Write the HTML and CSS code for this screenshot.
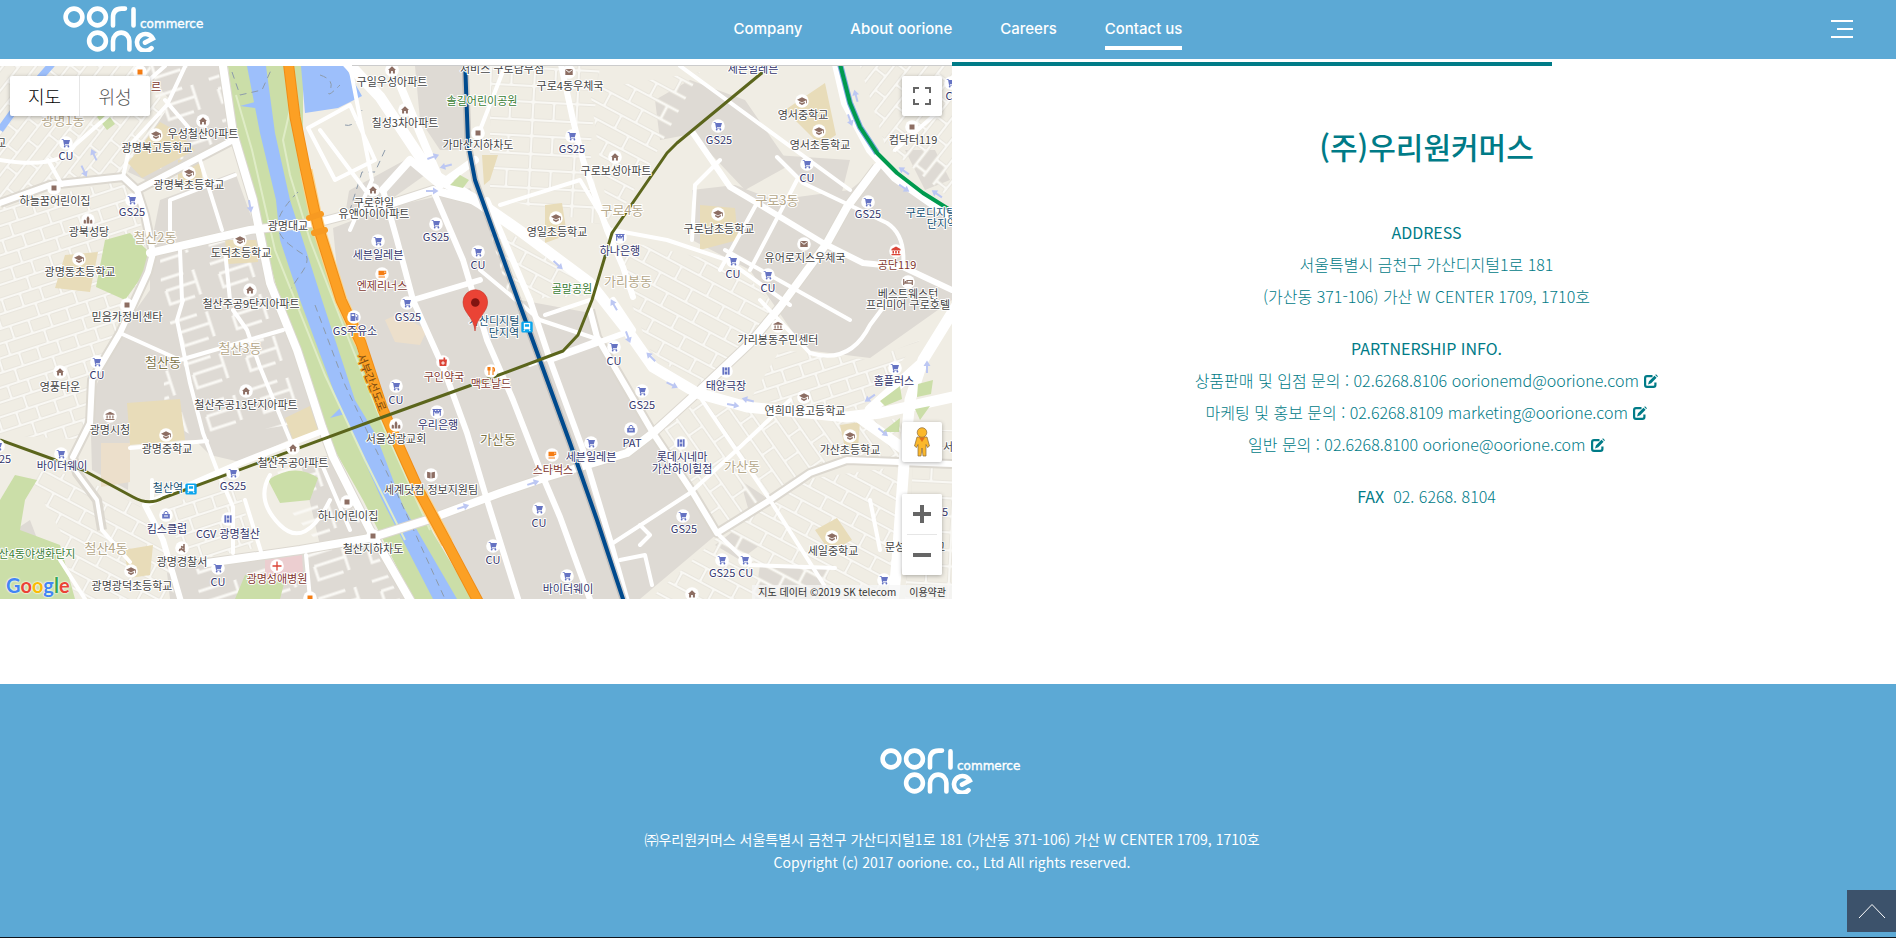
FILE: index.html
```html
<!DOCTYPE html>
<html lang="ko">
<head>
<meta charset="utf-8">
<meta name="viewport" content="width=device-width, initial-scale=1">
<title>oorione - Contact us</title>
<link rel="stylesheet" href="styles.css">
</head>
<body>
<svg class="defs" aria-hidden="true">
  <defs>
    <symbol id="logo" viewBox="0 0 144 46">
      <g fill="none" stroke="#fff" stroke-width="4.6" stroke-linecap="round">
        <circle cx="11" cy="11" r="8.4"/><circle cx="34.500" cy="11" r="8.4"/>
        <path d="M50 19.400V11.500Q50 2.600 58.500 2.600H62M70.500 3.400V19.400"/>
        <circle cx="34.500" cy="35" r="8.400"/>
        <path d="M50 43.400V35a8.200 8.400 0 0 1 16.400 0V43.400"/>
        <path d="M82 36.600L89.800 32.500A8.400 8.400 0 1 0 88.500 42.200"/>
      </g>
      <text x="77" y="21.500" class="logo-word">commerce</text>
    </symbol>
    <symbol id="edit" viewBox="0 0 15 15">
      <path fill="none" stroke="currentColor" stroke-width="2.200" d="M9.500 2.100H4Q2.100 2.100 2.100 4V11Q2.100 12.900 4 12.900H10.500Q12.400 12.900 12.400 11V8.500"/>
      <path fill="currentColor" d="M5 10.400L6 7.200 11.500 1.700 13.600 3.800 8.200 9.300ZM12.200 1L13 .2 15 2.200 14.200 3Z"/>
    </symbol>
    <g id="cart"><circle r="6.800" fill="#fff"/><path fill="#6573c3" d="M-4.300-3.800H-2.400L-1.900-3H4L2.800 1H-1.200L-1 1.700H3V2.600H-1.900L-2.900-2.900H-4.300Z"/><circle cx="-1.300" cy="3.500" r=".9" fill="#6573c3"/><circle cx="2.400" cy="3.500" r=".9" fill="#6573c3"/></g>
    <g id="home"><circle r="6.800" fill="#fff"/><path fill="#8d6e63" d="M0-3.800L4 0H2.900V3.400H.9V1H-.9V3.400H-2.900V0H-4Z"/></g>
    <g id="school"><circle r="6.800" fill="#fff"/><path fill="#8d6e63" d="M0-3.700L5-1.200V2.300H4.200V-.7L0 1.400-5-1.200ZM-2.800.8L0 2.200 2.800.8V2.500L0 4-2.800 2.500Z"/></g>
    <g id="dot"><circle r="6.800" fill="#fff"/><path fill="#8d6e63" d="M-2.500-2.500H2.500V2.500H-2.500Z"/></g>
    <g id="dot-hot"><circle r="6.800" fill="#fff"/><path fill="#f57c12" d="M-2.500-2.500H2.500V2.500H-2.500Z"/></g>
    <g id="cup"><circle r="6.800" fill="#fff"/><path fill="#f57c12" fill-rule="evenodd" d="M-3.500-3.300H4.200V0H2.500V1.300H-3.500ZM2.500-2.400V-1H3.300V-2.400ZM-3.500 2.400H3V3.500H-3.500Z"/></g>
    <g id="food"><circle r="6.800" fill="#fff"/><path fill="none" stroke="#f57c12" stroke-width="1.100" d="M-3-4V-1H-1V-4M-2-4V4M2 4V-3.500Q3.800-3.500 3.500 0H2"/></g>
    <g id="mail"><circle r="6.800" fill="#fff"/><path fill="#8d6e63" d="M-3.700-3H3.700V3H-3.700Z"/><path fill="none" stroke="#fff" d="M-3.500-2.500L0 .3 3.500-2.500"/></g>
    <g id="church"><circle r="6.800" fill="#fff"/><path fill="#8d6e63" d="M-4.300 3.500V.5L-3.200-.6-2.100.5V3.500ZM-1.300 3.500V-2L0-4 1.300-2V3.500ZM2.100 3.500V.5L3.200-.6 4.300.5V3.500Z"/></g>
    <g id="bank"><circle r="6.800" fill="#fff"/><path fill="none" stroke="#6573c3" stroke-width="1.100" d="M-4.500-2.500H4.500M-3.300-3V3.700M3.300-3V3.700M-3-2L-1 1 0-1.800 1 1 3-2M-4-.5H4"/></g>
    <g id="gov"><circle r="6.800" fill="#fff"/><path fill="#8d6e63" d="M0-4.200L4.500-2V-1.200H-4.500V-2ZM-3.500-.5H-2.300V2.500H-3.500ZM-.6-.5H.6V2.500H-.6ZM2.300-.5H3.500V2.500H2.300ZM-4.500 3H4.500V4H-4.500Z"/></g>
    <g id="fire"><circle r="6.800" fill="#fff"/><path fill="#db4437" d="M0-4.400L4.500-2V-.6H-4.500V-2ZM-3.500 0H-2V2.500H-3.500ZM-.8 0H.8V2.500H-.8ZM2 0H3.500V2.500H2ZM-4.500 3H4.500V4.200H-4.500Z"/></g>
    <g id="film"><circle r="6.800" fill="#fff"/><path fill="#6573c3" d="M-3.600-3.800H-1.800V3.800H-3.600ZM1.800-3.800H3.600V3.800H1.800ZM-1.200-3.600H1.200V-.5H-1.200ZM-1.200.5H1.200V3.600H-1.200Z"/></g>
    <g id="bag"><circle r="6.800" fill="#fff"/><path fill="#6573c3" d="M-3.800-1H3.800V3.500H-3.800Z"/><path fill="none" stroke="#6573c3" d="M-1.900-1V-2.500Q0-5 1.900-2.500V-1"/><path stroke="#fff" d="M-2 1H2"/></g>
    <g id="gas"><circle r="6.800" fill="#fff"/><path fill="#6573c3" fill-rule="evenodd" d="M-3.500-4H1.300V4H-3.500ZM-2.400-2.800V-1H.2V-2.800Z"/><path fill="none" stroke="#6573c3" d="M1.300 0H2.400V3H3.800V-1.500L2.300-3"/></g>
    <g id="book"><circle r="6.800" fill="#fff"/><path fill="#8d6e63" d="M-3.900-3.300L-.4-2.500V3.500L-3.900 2.700ZM3.900-3.300L.4-2.500V3.500L3.900 2.700Z"/></g>
    <g id="bed"><circle r="6.800" fill="#fff"/><path fill="none" stroke="#8d6e63" stroke-width="1.200" d="M-4.300-3V3M-4.300 1.200H4.300V3M4.300 1V-1.500H-1V1M-2.600-1V1"/></g>
    <g id="police"><circle r="6.800" fill="#fff"/><path fill="none" stroke="#8d6e63" stroke-width="1.500" d="M2-4V1.500H-3M0 0L-3 3M0 1.500L3 3.800M-1-1.500L2-.5"/></g>
    <g id="drug"><circle r="6.800" fill="#fff"/><path fill="#db4437" d="M-3.900-2.500H3.900V-1.500L3.300 4H-3.300L-3.900-1.500ZM.5-4.500H2.200V-2.500H.5Z"/><path stroke="#fff" d="M-1.800 1H1.800M0-.8V2.800"/></g>
    <g id="cross"><circle r="6.800" fill="#fff"/><path stroke="#db4437" stroke-width="1.300" d="M-4.500 0H4.500M0-4.500V4.500"/></g>
    <g id="train"><rect x="-5.700" y="-5.500" width="11.400" height="11" rx="1.500" fill="#0aa5ee"/><path fill="#fff" fill-rule="evenodd" d="M-3.200-4H3.200V2.200H-3.200ZM-2.100-2.800V-.2H2.100V-2.800Z"/><path stroke="#fff" stroke-width="1.100" d="M-2 2.500L-3.300 4M2 2.500L3.300 4"/></g>
    <path id="arrow" fill="#bcc7f3" d="M-6-1H1V-3.500L6.500 0 1 3.500V1H-6Z"/>
    <pattern id="st-a" width="34" height="26" patternUnits="userSpaceOnUse" patternTransform="rotate(-52)"><path class="lane-edge" d="M0 4H34M0 17H34M9 4V17M26 17V30M26-9V4"/><path class="lane" d="M0 4H34M0 17H34M9 4V17M26 17V30M26-9V4"/></pattern>
    <pattern id="st-b" width="40" height="28" patternUnits="userSpaceOnUse" patternTransform="rotate(-18)"><path class="lane-edge" d="M0 5H40M0 19H40M8 5V19M29 5V19M20 19V33M20-9V5"/><path class="lane" d="M0 5H40M0 19H40M8 5V19M29 5V19M20 19V33M20-9V5"/></pattern>
    <pattern id="st-c" width="36" height="30" patternUnits="userSpaceOnUse" patternTransform="rotate(28)"><path class="lane-edge" d="M0 5H36M0 20H36M7 5V20M27 20V35M27-10V5"/><path class="lane" d="M0 5H36M0 20H36M7 5V20M27 20V35M27-10V5"/></pattern>
    <pattern id="st-d" width="44" height="34" patternUnits="userSpaceOnUse" patternTransform="rotate(3)"><path class="lane-edge" d="M0 6H44M0 24H44M10 0V34M31 6V24"/><path class="lane" d="M0 6H44M0 24H44M10 0V34M31 6V24"/></pattern>
    <pattern id="st-e" width="38" height="32" patternUnits="userSpaceOnUse" patternTransform="rotate(55)"><path class="lane-edge" d="M0 6H38M0 21H38M12 6V21M30 21V38M30-11V6"/><path class="lane" d="M0 6H38M0 21H38M12 6V21M30 21V38M30-11V6"/></pattern>
    <pattern id="st-apt" width="56" height="44" patternUnits="userSpaceOnUse" patternTransform="rotate(-18)"><path class="lane" d="M6 8H34M12 20H44M12 20V34H38M44 8V34"/></pattern>
  </defs>
</svg>

<header class="site-header">
  <a class="brand" href="#" aria-label="oorione commerce"><svg class="logo" aria-hidden="true"><use href="#logo"/></svg></a>
  <nav class="main-nav">
    <a href="#">Company</a>
    <a href="#">About oorione</a>
    <a href="#">Careers</a>
    <a href="#" class="current">Contact us</a>
  </nav>
  <button class="menu" type="button" aria-label="Menu"><span></span><span class="short"></span><span></span></button>
</header>

<div class="tab-line"><i class="tab-off"></i><i class="tab-on"></i></div>

<main class="contact">
  <section class="map" aria-label="지도">
    <svg class="map-canvas" viewBox="0 66 952 533" preserveAspectRatio="xMidYMid slice">
      <rect y="66" width="952" height="533" fill="#f0ede4"/>
      <g fill="#dedad4">
        <path d="M140 66H220L234 136 150 182 128 172 150 125 170 100Z"/>
        <path d="M150 250L160 200 235 172 256 230 285 320 322 425 240 462 210 455 195 440 130 440 128 490 92 470 90 400 118 335 150 290Z"/>
        <path d="M170 599L165 555 230 560 320 545 300 460 333 455 372 530 412 599Z"/>
        <path d="M333 228L385 208 430 198 470 188 490 225 520 300 585 312 600 340 655 435 717 534 640 599H477L417 485 380 395 340 300Z"/>
        <path d="M350 185L405 160 425 175 390 200 345 215Z"/>
        <path d="M415 66H465V150L440 150 420 120Z"/>
        <path d="M655 100L690 80 745 100 790 165 745 190 692 134 660 140Z"/>
        <path d="M692 190L735 185 775 200 850 190 880 165 952 222V300L870 358 805 350 750 270 692 240Z"/>
        <path d="M775 155L850 160 840 200 800 182Z"/>
        <path d="M905 150L935 150 950 180 925 190Z"/>
        <path d="M715 545L735 530 760 545 740 560ZM760 565L830 568 820 599H755ZM740 480L770 500 750 515Z"/>
        <path d="M0 540L30 520 60 599H0Z"/>
      </g>
      <path fill="url(#st-a)" d="M0 66H150L165 112 123 176 0 203Z"/>
      <path fill="url(#st-b)" d="M0 206L125 180 150 250 118 335 92 380 88 440 0 435Z"/>
      <path fill="url(#st-c)" d="M25 470L75 475 140 506 165 545 175 599H75L60 530Z"/>
      <path fill="url(#st-b)" d="M165 508L235 475 255 548 185 562Z"/>
      <path fill="url(#st-d)" d="M490 66H600L590 150 600 225 490 195Z"/>
      <path fill="url(#st-c)" d="M590 90L700 72 655 155 610 230Z"/>
      <path fill="url(#st-c)" d="M620 240L735 265 780 310 697 390 650 350 630 300Z"/>
      <path fill="url(#st-a)" d="M860 66H952V200L885 145Z"/>
      <path fill="url(#st-e)" d="M700 400L900 420 902 460 840 462 718 532 655 435Z"/>
      <path fill="url(#st-c)" d="M720 535L800 480 902 466 893 599H650Z"/>
      <path fill="url(#st-d)" d="M915 430H952V599H905Z"/>
      <path fill="url(#st-c)" d="M485 215L600 295 510 300Z"/>
      <path fill="url(#st-b)" d="M780 350L870 360 920 340 860 410 750 400Z"/>
      <path fill="url(#st-apt)" d="M160 255L255 232 318 420 200 440 165 420Z"/>
      <path fill="url(#st-apt)" d="M255 470L330 462 400 599H190V570L320 545Z"/>
      <path fill="url(#st-apt)" d="M145 66H218L230 135 160 170Z"/>

      <g fill="#cbdea8">
        <path d="M228 66H302L312 213 340 300 367 377 390 440 433 533 473 599H413L363 500 325 433 285 320 262 232 235 133Z"/>
        <path d="M105 240L130 233 147 250 148 268 125 300 96 287Z"/>
        <path d="M0 500L15 475 37 480 25 500 20 530 60 545 75 599H0Z"/>
        <path d="M268 480Q295 462 318 478L310 500 280 503Z"/>
        <path d="M235 599L245 575 285 580 280 599ZM97 117L105 110 115 124 107 130Z"/>
      </g>
      <g fill="#e8dcb9">
        <path d="M160 122L178 132 195 150 142 178 128 163ZM178 160L200 163 203 182 178 188Z"/>
        <path d="M65 255L98 252 90 292 55 288Z"/>
        <path d="M127 403L180 399 185 440 130 445Z"/>
        <path d="M285 418L312 405 320 430 293 440Z"/>
        <path d="M225 240H258V262L228 264ZM123 550L153 545 150 575 130 578Z"/>
        <path d="M482 155L498 155 490 180 484 185ZM545 205L562 203 567 235 545 243Z"/>
        <path d="M785 110L825 83 836 135 820 145ZM700 205L735 208 738 240 700 250Z"/>
        <path d="M840 425L860 422 858 448 845 448ZM815 530L837 518 852 540 830 552Z"/>
      </g>
      <path fill="#ecdfcb" d="M101 443H130V482L101 487ZM385 320L398 314 427 330 420 345 395 342Z"/>
      <path fill="#ecced0" d="M265 560L302 555 303 572 265 578Z"/>
      <path fill="#9dbffb" d="M247 66H266L275 133 290 200 322 300 355 400 376 435 403 506 457 599H433L382 500 337 400 300 300 280 240 276 200 260 133Z"/>
      <path fill="#f0ede4" d="M303 66H352L385 120 405 160 350 190 325 215 313 213 303 130Z"/>
      <path fill="#9dbffb" d="M301 66H345L362 96 338 108 305 113ZM240 106L255 102V108ZM330 418L342 406 345 414Z"/>
      <path fill="none" stroke="#9dbffb" stroke-width="7" d="M52 64L38 80M18 105L0 130"/>
      <path fill="none" stroke="#8d9bab" stroke-dasharray="7 5" d="M315 305L345 385 400 500 445 599M232 72L240 95 262 90 272 68M298 192Q280 210 278 222T290 245 306 255Q310 262 300 275L290 290M320 75Q335 80 330 90T340 85M345 125Q355 128 362 110M385 150L375 172H362L350 210"/>
      <g fill="none" stroke="#dfecc6" stroke-width="2"><path d="M236 95L252 150 275 250 325 375 365 460 405 540M290 110L283 140 290 175 310 240 345 330 385 430 430 530"/></g>

      <g class="road-edge">
        <path d="M222 60L233 133 253 200 270 283 297 350 322 427 333 457 370 530 413 605"/>
        <path d="M0 203L50 185 123 177 137 190 233 140M137 190L145 215 153 253 148 272 120 333 92 380 90 423 73 457 77 473 97 500 102 530"/>
        <path d="M150 253L250 230 320 222 393 203 433 190 480 202"/>
        <path d="M207 563L300 550 370 538 427 520 500 493 547 477 627 453 653 433 697 393 750 343 780 307 827 243 847 207 877 167"/>
        <path d="M590 310L597 337 653 433 693 493 717 533 770 500 810 473 847 460 952 464"/>
      </g>
      <g class="road w4">
        <path d="M0 160Q60 170 75 145L165 66M48 160L62 185M120 333L180 360 283 330M183 300L177 320 190 383 203 433 217 470 233 507 233 553M233 310L247 330 260 367 293 447M123 177L130 145 167 105 188 60M165 100L195 135"/>
        <path d="M200 160L222 230M170 240V200L235 175M180 250L182 300M225 250L230 300M152 480V500M75 470L97 500 102 530 130 562M130 448L207 441M245 500L262 555M306 555L310 599M320 460L350 530"/>
        <path d="M60 560L85 599M270 475Q255 500 280 525T330 500M350 66L372 180 350 230M308 128L350 105 375 160 335 180ZM320 130L365 190"/>
        <path d="M613 230L667 240 727 260 790 305M777 157L803 183 887 223Q906 235 903 267M692 240L695 185 720 160M613 543L690 493 740 447 790 400M700 397L770 500 833 599M610 230L580 180 500 205M480 270L540 320 600 340M597 340L530 365M545 315L590 300"/>
        <path d="M505 66L480 130M680 66L850 190M725 250L850 320M760 300L810 353Q850 365 870 325L885 305M757 203L720 270M797 180L750 270M895 150L940 110M640 545L650 535 640 525M870 500L880 550M620 560L645 555 652 585M717 533L750 565 835 568"/>
      </g>
      <g class="road w6">
        <path d="M0 203L50 185 123 177 137 190 233 140M137 190L145 215 153 253 148 272 120 333 92 380 90 423 73 457"/>
        <path d="M383 190L397 240 413 300 443 367 467 433 487 500 520 605M433 190L463 260 487 340 513 400 543 477 560 517 592 605M530 300L550 360 583 450 610 540 628 605"/>
        <path d="M560 60L573 120 583 160 607 230 623 267 633 297M693 133L730 187 757 203 823 243 863 263 903 267 952 290M590 310L597 337 653 433 693 493 717 533 770 500 810 473 847 460 952 464"/>
        <path d="M320 432L240 463 160 498 145 505 163 540 182 605M487 200L530 300M413 300L480 280M613 300L633 330 600 342 550 360"/>
      </g>
      <g class="road w8">
        <path d="M222 60L233 133 253 200 270 283 297 350 322 427 333 457 370 530 413 605M150 253L250 230 320 222 393 203 433 190 480 202"/>
        <path d="M207 563L300 550 370 538 427 520 500 493 547 477 627 453 653 433 697 393 750 343 780 307 827 243 847 207 877 167"/>
        <path d="M835 60L845 103 870 150 895 178 952 218M400 85L425 145 440 180M383 190L410 160 440 185 475 160"/>
      </g>
      <g class="road w10">
        <path d="M345 60L380 97 400 127 420 157 437 177 480 203 523 233 590 283 627 330 653 367 697 393 747 407 847 417 880 413 952 397"/>
        <path d="M960 300L923 360 910 400 905 450 897 560 893 605M860 418L905 450M870 410L920 365"/>
      </g>
      <path fill="#cbdea8" d="M880 401L900 386 902 399 885 406ZM918 384L933 380 931 394 917 397ZM882 432L900 418 899 432ZM915 409L930 406 920 420ZM450 185L460 175 469 180 463 188Z"/>
      <path fill="none" stroke="#fcd58b" stroke-width="13" d="M306 170L315 213 320 233 341 300 361 343M420 493L447 543"/>
      <path fill="none" stroke="#f08d17" stroke-width="11" d="M288 60L295 117 305 167 315 213 320 233 341 300 361 343 383 410 402 453 420 493 447 543 480 605"/>
      <path fill="none" stroke="#fca024" stroke-width="9" d="M288 60L295 117 305 167 315 213 320 233 341 300 361 343 383 410 402 453 420 493 447 543 480 605"/>
      <path fill="none" stroke="#f79a22" stroke-width="6" stroke-linecap="round" d="M309 218L321 214M314 233L325 230"/>
      <g fill="none" stroke-linejoin="round">
        <path stroke="#a8a5a5" stroke-width="7" opacity=".5" d="M465 60L468 143 475 180 518 300 570 443 597 520 625 605"/>
        <path stroke="#004a8d" stroke-width="4" d="M465 60L468 143 475 180 518 300 570 443 597 520 625 605"/>
        <path stroke="#5b651c" stroke-width="3" d="M0 440L83 470 133 497Q149 506 163 498L383 417 480 382 563 351 578 335 592 300 612 233 667 153 677 143 763 72"/>
        <path stroke="#7ea8e0" stroke-width="6" d="M839 60L850 103 860 127 877 153"/>
        <path stroke="#009a4e" stroke-width="4" d="M839 60L850 103 860 127 877 153 897 173 923 193 955 213"/>
      </g>
      <g>
        <use href="#arrow" transform="translate(94 155) rotate(245)"/>
        <use href="#arrow" transform="translate(84 171) rotate(65)"/>
        <use href="#arrow" transform="translate(250 206) rotate(80)"/>
        <use href="#arrow" transform="translate(433 157) rotate(-20)"/>
        <use href="#arrow" transform="translate(446 166) rotate(165)"/>
        <use href="#arrow" transform="translate(432 191)"/>
        <use href="#arrow" transform="translate(558 265) rotate(42)"/>
        <use href="#arrow" transform="translate(614 305) rotate(240)"/>
        <use href="#arrow" transform="translate(628 337) rotate(70)"/>
        <use href="#arrow" transform="translate(651 357) rotate(225)"/>
        <use href="#arrow" transform="translate(672 385) rotate(25)"/>
        <use href="#arrow" transform="translate(733 405) rotate(10)"/>
        <use href="#arrow" transform="translate(748 400) rotate(195)"/>
        <use href="#arrow" transform="translate(850 120) rotate(70)"/>
        <use href="#arrow" transform="translate(856 96) rotate(255)"/>
        <use href="#arrow" transform="translate(904 171) rotate(215)"/>
        <use href="#arrow" transform="translate(904 188) rotate(35)"/>
        <use href="#arrow" transform="translate(937 194) rotate(215)"/>
        <use href="#arrow" transform="translate(870 398) rotate(145)"/>
        <use href="#arrow" transform="translate(883 432) rotate(40)"/>
        <use href="#arrow" transform="translate(927 367) rotate(270)"/>
        <use href="#arrow" transform="translate(533 483) rotate(-18)"/>
        <use href="#arrow" transform="translate(463 507) rotate(-18)"/>
      </g>

      <g transform="translate(7 7)">
        <use href="#home" x="196" y="114"/><use href="#school" x="149" y="128"/><use href="#cart" x="59" y="136"/><use href="#school" x="182" y="166"/>
        <use href="#dot" x="47" y="181"/><use href="#cart" x="125" y="193"/><use href="#church" x="81" y="213"/><use href="#school" x="72" y="252"/>
        <use href="#school" x="233" y="233"/><use href="#home" x="243" y="283"/><use href="#home" x="385" y="63"/><use href="#home" x="398" y="103"/>
        <use href="#dot" x="471" y="126"/><use href="#home" x="366" y="183"/><use href="#cart" x="429" y="217"/><use href="#cart" x="371" y="234"/>
        <use href="#cup" x="375" y="267"/><use href="#cart" x="471" y="245"/><use href="#dot-hot" x="133" y="65"/><use href="#mail" x="562" y="65"/>
        <use href="#cart" x="565" y="129"/><use href="#home" x="608" y="150"/><use href="#school" x="549" y="211"/><use href="#bank" x="613" y="230"/>
        <use href="#cart" x="711" y="119"/><use href="#school" x="795" y="94"/><use href="#school" x="812" y="124"/><use href="#cart" x="800" y="157"/>
        <use href="#school" x="711" y="207"/><use href="#cart" x="861" y="195"/><use href="#dot" x="905" y="120"/><use href="#cart" x="944" y="76"/>
        <use href="#mail" x="797" y="237"/><use href="#cart" x="726" y="254"/><use href="#cart" x="761" y="268"/><use href="#fire" x="889" y="244"/>
        <use href="#bed" x="901" y="275"/><use href="#dot" x="120" y="298"/><use href="#cart" x="90" y="355"/><use href="#home" x="53" y="365"/>
        <use href="#home" x="239" y="384"/><use href="#gas" x="347" y="310"/><use href="#cart" x="400" y="296"/><use href="#drug" x="436" y="355"/>
        <use href="#cart" x="389" y="379"/><use href="#bank" x="430" y="405"/><use href="#church" x="389" y="418"/><use href="#gov" x="103" y="409"/>
        <use href="#school" x="159" y="428"/><use href="#cart" x="54" y="447"/><use href="#cart" x="-9" y="439"/><use href="#home" x="286" y="441"/>
        <use href="#cart" x="226" y="466"/><use href="#train" x="184" y="482"/><use href="#book" x="424" y="468"/><use href="#dot" x="340" y="495"/>
        <use href="#bag" x="159" y="508"/><use href="#film" x="221" y="512"/><use href="#police" x="175" y="541"/><use href="#school" x="124" y="564"/>
        <use href="#cart" x="211" y="561"/><use href="#cross" x="270" y="559"/><use href="#dot" x="366" y="529"/><use href="#dot-hot" x="303" y="591"/>
        <use href="#train" x="520" y="320"/><use href="#cart" x="607" y="340"/><use href="#gov" x="771" y="319"/><use href="#film" x="719" y="364"/>
        <use href="#cart" x="635" y="384"/><use href="#bag" x="624" y="422"/><use href="#cart" x="584" y="436"/><use href="#cup" x="545" y="448"/>
        <use href="#food" x="484" y="364"/><use href="#film" x="674" y="436"/><use href="#school" x="797" y="390"/><use href="#cart" x="888" y="361"/>
        <use href="#school" x="843" y="429"/><use href="#cart" x="532" y="502"/><use href="#cart" x="676" y="509"/><use href="#cart" x="486" y="539"/>
        <use href="#cart" x="560" y="569"/><use href="#school" x="825" y="530"/><use href="#cart" x="715" y="553"/><use href="#cart" x="738" y="553"/>
        <use href="#home" x="685" y="587"/><use href="#cart" x="877" y="573"/>
      </g>

      <g class="area">
        <text x="63" y="125">광명1동</text><text x="155" y="242">철산2동</text><text x="240" y="353">철산3동</text><text x="106" y="553">철산4동</text>
        <text x="622" y="215">구로4동</text><text x="777" y="205">구로3동</text><text x="628" y="286">가리봉동</text><text x="742" y="471">가산동</text>
        <text class="ward" x="163" y="367">철산동</text><text class="ward" x="498" y="444">가산동</text>
      </g>
      <g class="poi">
        <text x="203" y="138">우성철산아파트</text><text x="157" y="152">광명북고등학교</text><text x="189" y="189">광명북초등학교</text><text x="55" y="205">하늘꿈어린이집</text>
        <text x="89" y="236">광북성당</text><text x="80" y="276">광명동초등학교</text><text x="241" y="257">도덕초등학교</text><text x="251" y="308">철산주공9단지아파트</text>
        <text x="288" y="230">광명대교</text><text x="392" y="86">구일우성아파트</text><text x="405" y="127">칠성3차아파트</text><text x="478" y="149">가마산지하차도</text>
        <text x="502" y="73">서비스 구로남부점</text><text x="374" y="207">구로한일</text><text x="374" y="218">유앤아이아파트</text><text x="570" y="90">구로4동우체국</text>
        <text x="616" y="175">구로보성아파트</text><text x="557" y="236">영일초등학교</text><text x="803" y="119">영서중학교</text><text x="820" y="149">영서초등학교</text>
        <text x="719" y="233">구로남초등학교</text><text x="913" y="144">컴닥터119</text><text x="805" y="262">유어로지스우체국</text><text x="908" y="298">베스트웨스턴</text>
        <text x="908" y="309">프리미어 구로호텔</text><text x="127" y="321">믿음카정비센타</text><text x="60" y="391">영풍타운</text><text x="246" y="409">철산주공13단지아파트</text>
        <text x="396" y="443">서울성광교회</text><text x="110" y="434">광명시청</text><text x="167" y="453">광명중학교</text><text x="293" y="467">철산주공아파트</text>
        <text x="431" y="494">세계닷컴 정보지원팀</text><text x="348" y="520">하니어린이집</text><text x="182" y="566">광명경찰서</text><text x="132" y="590">광명광덕초등학교</text>
        <text x="373" y="553">철산지하차도</text><text x="778" y="344">가리봉동주민센터</text><text x="805" y="415">연희미용고등학교</text><text x="850" y="454">가산초등학교</text>
        <text x="833" y="555">세일중학교</text><text x="948" y="451">서</text><text x="895" y="551">문성</text><text x="940" y="551">교</text><text x="1" y="147">교</text>
      </g>
      <g class="poi shop">
        <text x="66" y="160">CU</text><text x="132" y="216">GS25</text><text x="436" y="241">GS25</text><text x="378" y="259">세븐일레븐</text><text x="478" y="269">CU</text>
        <text x="572" y="153">GS25</text><text x="620" y="255">하나은행</text><text x="753" y="73">세븐일레븐</text><text x="719" y="144">GS25</text><text x="807" y="182">CU</text>
        <text x="868" y="218">GS25</text><text x="953" y="100">CU</text><text x="733" y="278">CU</text><text x="768" y="292">CU</text><text x="97" y="379">CU</text>
        <text x="355" y="335">GS주유소</text><text x="408" y="321">GS25</text><text x="396" y="404">CU</text><text x="438" y="429">우리은행</text><text x="62" y="470">바이더웨이</text>
        <text x="5" y="463">25</text><text x="233" y="490">GS25</text><text x="167" y="533">킴스클럽</text><text x="228" y="538">CGV 광명철산</text><text x="218" y="586">CU</text>
        <text x="614" y="365">CU</text><text x="726" y="390">태양극장</text><text x="642" y="409">GS25</text><text x="632" y="447">PAT</text><text x="591" y="461">세븐일레븐</text>
        <text x="682" y="461">롯데시네마</text><text x="682" y="473">가산하이힐점</text><text x="894" y="385">홈플러스</text><text x="539" y="527">CU</text><text x="684" y="533">GS25</text>
        <text x="493" y="564">CU</text><text x="568" y="593">바이더웨이</text><text x="731" y="577">GS25 CU</text><text x="945" y="516">5</text>
      </g>
      <g class="poi hot">
        <text x="382" y="290">엔제리너스</text><text x="156" y="91">르</text><text x="897" y="269">공단119</text><text x="444" y="381">구인약국</text>
        <text x="277" y="583">광명성애병원</text><text x="553" y="474">스타벅스</text><text x="491" y="388">맥도날드</text>
      </g>
      <g class="poi park"><text x="482" y="105">솔길어린이공원</text><text x="572" y="293">골말공원</text><text x="37" y="558">산4동야생화단지</text></g>
      <g class="poi station">
        <text x="168" y="492">철산역</text><text x="494" y="325">가산디지털</text><text x="504" y="337">단지역</text><text x="931" y="217">구로디지털</text><text x="942" y="228">단지역</text>
      </g>
      <text class="poi highway" transform="translate(368 384) rotate(68)">서부간선도로</text>
      <path fill="#ea4335" stroke="#c5372c" stroke-width=".6" d="M475 331C474 317 463 313 463 302A12.300 12.300 0 0 1 487.600 302C487.600 313 476.500 317 475 331Z"/>
      <circle cx="475.300" cy="302.500" r="4.300" fill="#811411"/>
    </svg>

    <div class="map-type">
      <button type="button" class="on">지도</button><button type="button">위성</button>
    </div>
    <button class="map-btn full" type="button" aria-label="전체화면">
      <svg width="18" height="18" viewBox="0 0 18 18"><path fill="none" stroke="#666" stroke-width="2" d="M1 6V1H6M12 1H17V6M17 12V17H12M6 17H1V12"/></svg>
    </button>
    <div class="map-tools">
      <button class="map-btn" type="button" aria-label="거리뷰">
        <svg width="18" height="30" viewBox="0 0 18 30"><path fill="#fbb82c" stroke="#8a6a3c" stroke-width=".7" d="M4 10H14L16.500 19 14.500 20.500 13 17.500V29H10L9 21 8 29H5V17.500L3.500 20.500 1.500 19Z"/><circle cx="9" cy="5.500" r="4.800" fill="#fbb82c" stroke="#8a6a3c" stroke-width=".7"/><path fill="#e2701c" d="M6 10.500H12L9 15Z"/></svg>
      </button>
      <div class="zoom">
        <button class="map-btn" type="button" aria-label="확대"><svg width="18" height="18"><path stroke="#666" stroke-width="4" d="M0 9H18M9 0V18"/></svg></button>
        <button class="map-btn" type="button" aria-label="축소"><svg width="18" height="18"><path stroke="#666" stroke-width="4" d="M0 9H18"/></svg></button>
      </div>
    </div>
    <div class="google" aria-label="Google"><b class="g-blue">G</b><b class="g-red">o</b><b class="g-yellow">o</b><b class="g-blue">g</b><b class="g-green">l</b><b class="g-red">e</b></div>
    <div class="credit"><span>지도 데이터 ©2019 SK telecom</span><a href="#">이용약관</a></div>
  </section>

  <section class="info">
    <h1>(주)우리원커머스</h1>
    <div class="block">
      <h2>ADDRESS</h2>
      <p>서울특별시 금천구 가산디지털1로 181</p>
      <p>(가산동 371-106) 가산 W CENTER 1709, 1710호</p>
    </div>
    <div class="block">
      <h2>PARTNERSHIP INFO.</h2>
      <p>상품판매 및 입점 문의 : 02.6268.8106 oorionemd@oorione.com <a href="mailto:oorionemd@oorione.com" aria-label="메일 쓰기"><svg class="edit"><use href="#edit"/></svg></a></p>
      <p>마케팅 및 홍보 문의 : 02.6268.8109 marketing@oorione.com <a href="mailto:marketing@oorione.com" aria-label="메일 쓰기"><svg class="edit"><use href="#edit"/></svg></a></p>
      <p>일반 문의 : 02.6268.8100 oorione@oorione.com <a href="mailto:oorione@oorione.com" aria-label="메일 쓰기"><svg class="edit"><use href="#edit"/></svg></a></p>
    </div>
    <div class="block">
      <p><strong>FAX</strong>&nbsp; 02. 6268. 8104</p>
    </div>
  </section>
</main>

<footer class="site-footer">
  <svg class="logo" role="img" aria-label="oorione commerce"><use href="#logo"/></svg>
  <p>㈜우리원커머스 서울특별시 금천구 가산디지털1로 181 (가산동 371-106) 가산 W CENTER 1709, 1710호<br>Copyright (c) 2017 oorione. co., Ltd All rights reserved.</p>
</footer>
<a class="to-top" href="#" aria-label="맨 위로"><svg width="28" height="16" viewBox="0 0 28 16"><path fill="none" stroke="#fff" d="M1 15L14 1.500 27 15"/></svg></a>
</body>
</html>
```
FILE: styles.css
```css
* { box-sizing: border-box; }

body {
  margin: 0;
  background: #fff;
  font-family: "Noto Sans CJK KR", "Noto Sans", sans-serif;
  color: #007b87;
}

h1, h2, p { margin: 0; }
a { color: inherit; text-decoration: none; }
button { border: 0; padding: 0; background: none; font: inherit; cursor: pointer; }

.defs { position: absolute; width: 0; height: 0; }

/* Header */
.site-header {
  display: grid;
  grid-template-columns: 1fr auto 1fr;
  align-items: center;
  height: 59px;
  padding: 0 43px 2px 63px;
  background: #5ca9d5;
}
.brand { display: flex; }
.logo { display: block; width: 144px; height: 46px; }
.logo-word { font: 12px "DejaVu Sans", sans-serif; fill: #fff; stroke: #fff; stroke-width: .4px; }

.main-nav { display: flex; align-self: start; gap: 48px; }
.main-nav a {
  display: block;
  padding: 18px 0 7px;
  border-bottom: 4px solid transparent;
  font: 500 15px/21px Inter, sans-serif;
  color: #fff;
}
.main-nav .current { border-color: #fff; }

.menu {
  display: flex;
  flex-direction: column;
  align-items: flex-end;
  gap: 6px;
  justify-self: end;
}
.menu span { width: 22px; height: 2px; background: #fff; }
.menu .short { width: 16px; }

/* Tab underline */
.tab-line {
  display: grid;
  grid-template-columns: 352fr 600fr 600fr 344fr;
  align-items: end;
  height: 7px;
}
.tab-off { grid-column: 2; height: 1px; background: #ccc; }
.tab-on { grid-column: 3; height: 4px; background: #007b87; }

/* Contact */
.contact {
  display: grid;
  grid-template-columns: 952fr 944fr;
  padding-bottom: 85px;
}

.map { position: relative; height: 533px; overflow: hidden; }
.map-canvas { display: block; width: 100%; height: 100%; }

.lane-edge { fill: none; stroke: #d9d4c8; stroke-width: 4; }
.lane { fill: none; stroke: #f9f8f4; stroke-width: 3; }
.road-edge { fill: none; stroke: #dcd8d0; stroke-width: 10; stroke-linejoin: round; }
.road { fill: none; stroke: #fff; stroke-linejoin: round; stroke-linecap: round; }
.w4 { stroke-width: 4; }
.w6 { stroke-width: 6; }
.w8 { stroke-width: 8; }
.w10 { stroke-width: 11; }

.poi, .area {
  font-size: 11px;
  text-anchor: middle;
  fill: #444;
  stroke: #fff;
  stroke-width: 2px;
  stroke-linejoin: round;
  paint-order: stroke;
}
.shop { fill: #33356b; }
.hot { fill: #83382f; }
.park { fill: #3b7d35; }
.station { fill: #175173; }
.highway { fill: #7a4a10; stroke: #fca024; }
.area { font-size: 13px; fill: #b5a88a; }
.ward { fill: #7d7448; }

.map-type {
  position: absolute;
  top: 10px;
  left: 10px;
  display: flex;
  background: #fff;
  border-radius: 2px;
  box-shadow: 0 1px 4px rgba(0, 0, 0, .3);
}
.map-type button {
  width: 70px;
  height: 40px;
  font-size: 18px;
  font-weight: 300;
  line-height: 38px;
  color: #565656;
}
.map-type .on { color: #000; border-right: 1px solid #e6e6e6; }

.map-btn {
  display: grid;
  place-items: center;
  width: 40px;
  height: 40px;
  background: #fff;
  border-radius: 2px;
  box-shadow: 0 1px 4px rgba(0, 0, 0, .3);
}
.full { position: absolute; top: 10px; right: 10px; }
.map-tools {
  position: absolute;
  right: 10px;
  bottom: 24px;
  display: grid;
  gap: 32px;
}
.zoom { background: #fff; border-radius: 2px; box-shadow: 0 1px 4px rgba(0, 0, 0, .3); }
.zoom .map-btn { box-shadow: none; }
.zoom .map-btn + .map-btn::before {
  content: "";
  width: 30px;
  height: 1px;
  background: #e6e6e6;
}
.zoom .map-btn + .map-btn { height: 41px; grid-template-rows: 1px 40px; }

.google {
  position: absolute;
  left: 6px;
  bottom: 2px;
  font: 20px/24px Lato, sans-serif;
  text-shadow: 0 0 2px #fff, 0 0 2px #fff;
}
.g-blue { color: #4285f4; }
.g-red { color: #ea4335; }
.g-yellow { color: #fbbc05; }
.g-green { color: #34a853; }

.credit {
  position: absolute;
  right: 0;
  bottom: 0;
  display: flex;
  gap: 13px;
  padding: 0 6px;
  background: rgba(245, 245, 245, .75);
  font-size: 10px;
  line-height: 14px;
  color: #333;
}

.info { padding: 55px 0 0 5px; text-align: center; }
.info h1 {
  margin-bottom: 45px;
  font-size: 30px;
  font-weight: 500;
  line-height: 50px;
}
.block { margin-bottom: 20px; font-size: 16px; font-weight: 300; line-height: 32px; }
.block h2, .block strong { font-size: 16px; font-weight: 400; }
.edit { width: 15px; height: 15px; vertical-align: -2px; }

/* Footer */
.site-footer {
  display: flex;
  flex-direction: column;
  align-items: center;
  gap: 34px;
  min-height: 254px;
  padding: 64px 0 62px 8px;
  border-bottom: 1px solid #10151c;
  background: #5ca9d5;
  color: #fff;
  text-align: center;
  font-size: 14px;
  line-height: 23px;
}

.to-top {
  position: fixed;
  right: 0;
  bottom: 6px;
  display: grid;
  place-items: center;
  width: 49px;
  height: 42px;
  background: #3c526b;
}
```
